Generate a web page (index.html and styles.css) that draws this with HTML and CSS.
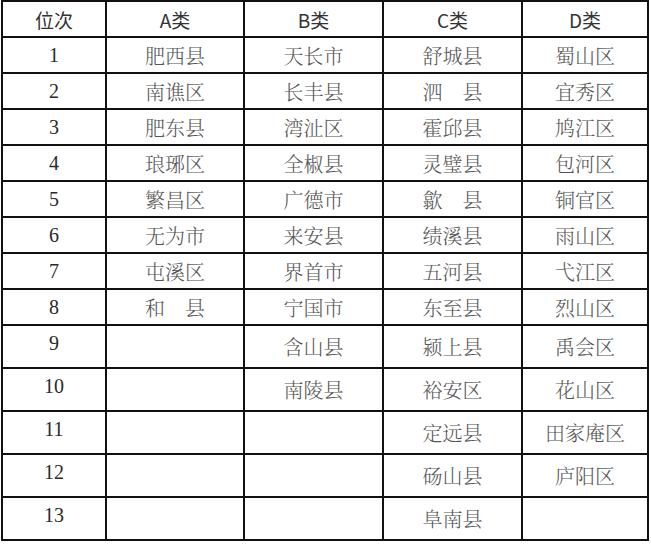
FILE: index.html
```html
<!DOCTYPE html>
<html lang="zh-CN">
<head>
<meta charset="utf-8">
<title>位次表</title>
<link rel="stylesheet" href="styles.css">
</head>
<body>
<div class="table">
  <div class="cell head">位次</div>
  <div class="cell head">A类</div>
  <div class="cell head">B类</div>
  <div class="cell head">C类</div>
  <div class="cell head">D类</div>

  <div class="cell num">1</div><div class="cell name">肥西县</div><div class="cell name">天长市</div><div class="cell name">舒城县</div><div class="cell name">蜀山区</div>
  <div class="cell num">2</div><div class="cell name">南谯区</div><div class="cell name">长丰县</div><div class="cell name">泗　县</div><div class="cell name">宜秀区</div>
  <div class="cell num">3</div><div class="cell name">肥东县</div><div class="cell name">湾沚区</div><div class="cell name">霍邱县</div><div class="cell name">鸠江区</div>
  <div class="cell num">4</div><div class="cell name">琅琊区</div><div class="cell name">全椒县</div><div class="cell name">灵璧县</div><div class="cell name">包河区</div>
  <div class="cell num">5</div><div class="cell name">繁昌区</div><div class="cell name">广德市</div><div class="cell name">歙　县</div><div class="cell name">铜官区</div>
  <div class="cell num">6</div><div class="cell name">无为市</div><div class="cell name">来安县</div><div class="cell name">绩溪县</div><div class="cell name">雨山区</div>
  <div class="cell num">7</div><div class="cell name">屯溪区</div><div class="cell name">界首市</div><div class="cell name">五河县</div><div class="cell name">弋江区</div>
  <div class="cell num">8</div><div class="cell name">和　县</div><div class="cell name">宁国市</div><div class="cell name">东至县</div><div class="cell name">烈山区</div>
  <div class="cell num up">9</div><div class="cell"></div><div class="cell name">含山县</div><div class="cell name">颍上县</div><div class="cell name">禹会区</div>
  <div class="cell num up">10</div><div class="cell"></div><div class="cell name">南陵县</div><div class="cell name">裕安区</div><div class="cell name">花山区</div>
  <div class="cell num up">11</div><div class="cell"></div><div class="cell"></div><div class="cell name">定远县</div><div class="cell name">田家庵区</div>
  <div class="cell num up">12</div><div class="cell"></div><div class="cell"></div><div class="cell name">砀山县</div><div class="cell name">庐阳区</div>
  <div class="cell num up">13</div><div class="cell"></div><div class="cell"></div><div class="cell name">阜南县</div><div class="cell"></div>
</div>
</body>
</html>
```

FILE: styles.css
```css
html, body {
  margin: 0;
  padding: 0;
  background: #ffffff;
}

.table {
  margin: 0 0 0 1px;
  width: 648px;
  box-sizing: border-box;
  display: grid;
  grid-template-columns: 102px 136px 137px 137px 124px;
  grid-template-rows: repeat(9, 34px) repeat(5, 41px);
  gap: 2px;
  padding: 2px;
  background: #111111;
}

.cell {
  background: #ffffff;
  display: flex;
  align-items: center;
  justify-content: center;
}

.head {
  font-family: "Noto Sans CJK SC", "Noto Sans", sans-serif;
  font-size: 19px;
  color: #333333;
}

.num {
  font-family: "Liberation Serif", "DejaVu Serif", serif;
  font-size: 20px;
  color: #2a2a2a;
}

.num.up {
  padding-bottom: 6px;
}

.name {
  font-family: "Noto Serif CJK SC", "Noto Sans CJK SC", serif;
  font-size: 20px;
  font-weight: 300;
  color: #555555;
}
```
